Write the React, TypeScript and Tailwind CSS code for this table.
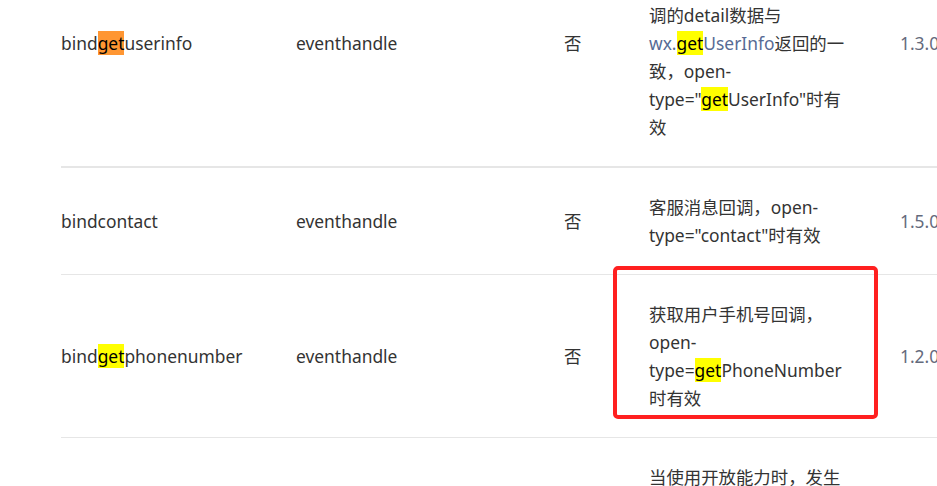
const font = { fontFamily: '"Noto Sans", "Noto Sans CJK SC", sans-serif' };

function Hl({ children, tone = "yellow" }: { children: React.ReactNode; tone?: "yellow" | "orange" }) {
  return (
    <span className={tone === "orange" ? "bg-[#ff9632] text-black" : "bg-[#ffff00] text-black"}>{children}</span>
  );
}

type Row = {
  name: React.ReactNode;
  type: string;
  required: string;
  desc: React.ReactNode[];
  version: string;
  boxed?: boolean;
  first?: boolean;
};

const rows: Row[] = [
  {
    name: (
      <>
        bind<Hl tone="orange">get</Hl>userinfo
      </>
    ),
    type: "eventhandle",
    required: "否",
    desc: [
      "用户点击该按钮时，会返",
      "回获取到的用户信息，回",
      "调的detail数据与",
      <>
        <span className="text-[#576b95]">
          wx.<Hl>get</Hl>UserInfo
        </span>
        返回的一
      </>,
      "致，open-",
      <>
        type="<Hl>get</Hl>UserInfo"时有
      </>,
      "效",
    ],
    version: "1.3.0",
    first: true,
  },
  {
    name: "bindcontact",
    type: "eventhandle",
    required: "否",
    desc: ["客服消息回调，open-", 'type="contact"时有效'],
    version: "1.5.0",
  },
  {
    name: (
      <>
        bind<Hl>get</Hl>phonenumber
      </>
    ),
    type: "eventhandle",
    required: "否",
    desc: [
      "获取用户手机号回调，",
      "open-",
      <>
        type=<Hl>get</Hl>PhoneNumber
      </>,
      "时有效",
    ],
    version: "1.2.0",
    boxed: true,
  },
  {
    name: "binderror",
    type: "eventhandle",
    required: "否",
    desc: ["当使用开放能力时，发生", "错误的回调，open-", 'type="launchApp"时有效', "", ""],
    version: "1.9.5",
  },
];

export default function App() {
  return (
    <div className="w-[937px] h-[486px] overflow-hidden bg-white text-[17.4px] leading-[28px] text-[#333]" style={font}>
      <div className="ml-[61px] -mt-[80px] w-[1000px]">
        {rows.map((r, i) => (
          <div
            key={i}
            className={`relative grid grid-cols-[235px_268px_85px_251px_120px] items-center py-[25px] ${
              r.first ? "border-b-2 border-[#e6e6e6]" : "border-b border-[#e6e6e6]"
            }`}
          >
            <div>{r.name}</div>
            <div>{r.type}</div>
            <div>{r.required}</div>
            <div className="flex flex-col whitespace-nowrap">
              {r.desc.map((line, j) => (
                <span key={j} className="h-[28px]">{line}</span>
              ))}
            </div>
            <div className="text-[#646a7c]">{r.version}</div>
            {r.boxed && (
              <div className="absolute left-[552px] top-[-9px] w-[265px] h-[153px] rounded-[5px] border-[4px] border-[#ff2020]" />
            )}
          </div>
        ))}
      </div>
    </div>
  );
}
